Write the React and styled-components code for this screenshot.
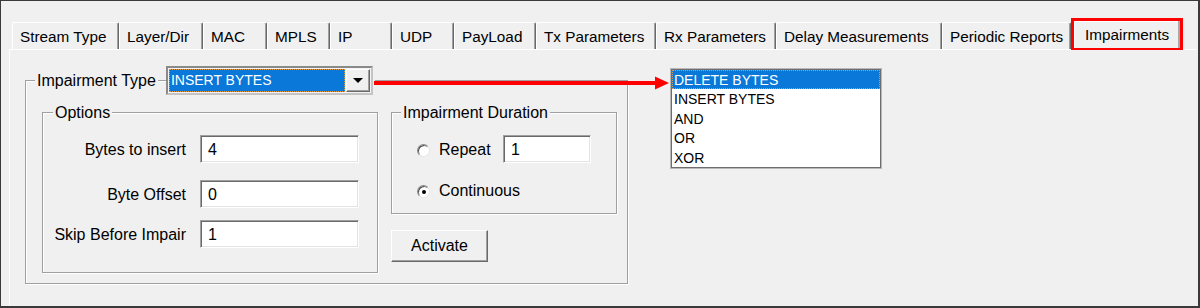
import React from "react";
import styled, { createGlobalStyle } from "styled-components";

const Global = createGlobalStyle`
  html, body { margin: 0; padding: 0; background: #f0f0f0; }
  body { font-family: "Liberation Sans", Arial, sans-serif; color: #000; }
  #root { width: 1200px; height: 308px; }
`;

const Window = styled.div`
  box-sizing: border-box;
  width: 1200px;
  height: 308px;
  background: #f0f0f0;
  border: 1px solid #3a3a3a;
  border-right-width: 2px;
  border-bottom-width: 2px;
  display: flex;
  flex-direction: column;
  padding: 17px 2px 0 8px;
  overflow: hidden;
`;

const TabStrip = styled.div`
  display: flex;
  align-items: flex-start;
  height: 32px;
  margin-left: 3px;
`;

const Tab = styled.div`
  box-sizing: border-box;
  flex: none;
  width: ${(p) => p.$w}px;
  height: 27px;
  margin-top: 4px;
  padding-left: 7px;
  padding-top: 1px;
  display: flex;
  align-items: center;
  border-left: 1px solid #fff;
  border-top: 1px solid #fff;
  border-right: 1px solid #696969;
  box-shadow: inset -1px 0 0 #a0a0a0;
  border-top-left-radius: 2px;
  border-top-right-radius: 2px;
  font-size: 15.3px;
  white-space: nowrap;
  overflow: hidden;
`;

const ActiveTab = styled.div`
  position: relative;
  z-index: 1;
  box-sizing: border-box;
  flex: none;
  width: ${(p) => p.$w}px;
  height: 32px;
  padding-left: 11px;
  padding-top: 1px;
  display: flex;
  align-items: center;
  background: #f0f0f0;
  border: 3px solid #ff0000;
  border-bottom-width: 2px;
  box-shadow: inset -2px 0 0 #a9a9a9, inset 1px 1px 0 #fff;
  font-size: 15.3px;
  white-space: nowrap;
`;

const Panel = styled.div`
  position: relative;
  flex: 1;
  margin-top: -1px;
  border-top: 1px solid #fff;
  border-left: 1px solid #fff;
  display: flex;
  align-items: flex-start;
  padding: 16px 0 0 15px;
`;

const Group = styled.fieldset`
  box-sizing: border-box;
  flex: none;
  margin: 0;
  padding: 0;
  min-width: 0;
  width: ${(p) => p.$w}px;
  height: ${(p) => p.$h}px;
  border: 1px solid #a0a0a0;
  box-shadow: 1px 1px 0 #fff, inset 1px 1px 0 #fff;
`;

const Legend = styled.legend`
  margin-left: ${(p) => p.$ml}px;
  padding: 0 2px;
  background: #f0f0f0;
`;

const LegendRow = styled.div`
  display: flex;
  align-items: center;
  font-size: 16px;
  line-height: 19px;
  white-space: nowrap;
`;

const Connector = styled.span`
  display: block;
  width: 8px;
  height: 1px;
  margin-left: 2px;
  background: #a0a0a0;
  box-shadow: 0 1px 0 #fff;
`;

const Combo = styled.div`
  box-sizing: border-box;
  width: 207px;
  height: 29px;
  display: flex;
  gap: 1px;
  padding: 1px;
  border: 2px solid;
  border-color: #8a8a8a #c4c4c4 #c4c4c4 #8a8a8a;
  background: #f4f4f4;
`;

const ComboValue = styled.div`
  flex: 1;
  display: flex;
  align-items: center;
  padding-left: 2px;
  background: #0a78d8;
  color: #fff;
  font-size: 14px;
  outline: 1px dotted #e09a4a;
  outline-offset: -1px;
`;

const ComboButton = styled.div`
  box-sizing: border-box;
  width: 24px;
  display: flex;
  align-items: center;
  justify-content: center;
  background: #f0f0f0;
  border: 1px solid;
  border-color: #fff #696969 #696969 #fff;
  box-shadow: inset -1px -1px 0 #a0a0a0;
`;

const Caret = styled.span`
  width: 0;
  height: 0;
  border-left: 5px solid transparent;
  border-right: 5px solid transparent;
  border-top: 5px solid #000;
`;

const GroupBody = styled.div`
  display: flex;
  align-items: flex-start;
  gap: ${(p) => p.$gap || 0}px;
  padding: ${(p) => p.$pad};
`;

const Column = styled.div`
  display: flex;
  flex-direction: column;
  align-items: flex-start;
`;

const FieldRow = styled.div`
  display: flex;
  align-items: center;
  height: 28px;
  margin-top: ${(p) => p.$mt}px;
  font-size: 16px;
`;

const FieldLabel = styled.label`
  width: ${(p) => p.$w}px;
  padding-top: 2px;
  text-align: ${(p) => p.$align || "left"};
  margin-right: ${(p) => p.$mr || 0}px;
  white-space: nowrap;
`;

const TextBox = styled.div`
  box-sizing: border-box;
  width: ${(p) => p.$w}px;
  height: 28px;
  display: flex;
  align-items: center;
  padding-left: 7px;
  padding-top: 1px;
  background: #fff;
  border: 1px solid;
  border-color: #a0a0a0 #fff #fff #a0a0a0;
  box-shadow: inset 1px 1px 0 #696969, inset -1px -1px 0 #e3e3e3;
  font-size: 16px;
`;

const Radio = styled.span`
  box-sizing: border-box;
  flex: none;
  width: 13px;
  height: 13px;
  margin: 3px 9px 0 0;
  border-radius: 50%;
  background: #fff;
  border: 1px solid;
  border-color: #8a8a8a #e6e6e6 #e6e6e6 #8a8a8a;
  box-shadow: inset 1px 1px 0 #505050;
  display: flex;
  align-items: center;
  justify-content: center;
  &::after {
    content: "";
    width: 4px;
    height: 4px;
    border-radius: 50%;
    background: ${(p) => (p.$checked ? "#000" : "transparent")};
  }
`;

const Button = styled.div`
  box-sizing: border-box;
  width: 97px;
  height: 32px;
  margin-top: 16px;
  display: flex;
  align-items: center;
  justify-content: center;
  background: #f0f0f0;
  border: 1px solid;
  border-color: #fff #696969 #696969 #fff;
  box-shadow: inset -1px -1px 0 #a0a0a0;
  font-size: 16px;
`;

const ListBox = styled.div`
  box-sizing: border-box;
  flex: none;
  width: 210px;
  margin: 3px 0 0 43px;
  border: 1px solid #6e6e6e;
  box-shadow: 0 0 0 1px #b8b8b8;
  background: #fff;
`;

const ListItem = styled.div`
  height: 19.4px;
  line-height: 20px;
  padding-left: 2px;
  font-size: 14px;
  background: ${(p) => (p.$selected ? "#0a78d8" : "transparent")};
  color: ${(p) => (p.$selected ? "#fff" : "#000")};
  outline: ${(p) => (p.$selected ? "1px dotted #e09a4a" : "none")};
  outline-offset: -1px;
`;

const Arrow = styled.svg`
  position: absolute;
  left: 364px;
  top: 26px;
`;

const tabs = [
  ["Stream Type", 107],
  ["Layer/Dir", 84],
  ["MAC", 64],
  ["MPLS", 63],
  ["IP", 62],
  ["UDP", 62],
  ["PayLoad", 82],
  ["Tx Parameters", 120],
  ["Rx Parameters", 120],
  ["Delay Measurements", 166],
  ["Periodic Reports", 129],
];

const options = ["DELETE BYTES", "INSERT BYTES", "AND", "OR", "XOR"];

export default function App() {
  return (
    <>
      <Global />
      <Window>
        <TabStrip>
          {tabs.map(([label, w]) => (
            <Tab key={label} $w={w}>
              {label}
            </Tab>
          ))}
          <ActiveTab $w={112}>Impairments</ActiveTab>
        </TabStrip>
        <Panel>
          <Group $w={603} $h={218}>
            <Legend $ml={9}>
              <LegendRow>
                <span>Impairment Type</span>
                <Connector />
                <Combo>
                  <ComboValue>INSERT BYTES</ComboValue>
                  <ComboButton>
                    <Caret />
                  </ComboButton>
                </Combo>
              </LegendRow>
            </Legend>
            <GroupBody $gap={13} $pad="8px 0 0 16px">
              <Group $w={336} $h={170}>
                <Legend $ml={10}>
                  <LegendRow>Options</LegendRow>
                </Legend>
                <Column>
                  <FieldRow $mt={13}>
                    <FieldLabel $w={143} $align="right" $mr={14}>
                      Bytes to insert
                    </FieldLabel>
                    <TextBox $w={159}>4</TextBox>
                  </FieldRow>
                  <FieldRow $mt={17}>
                    <FieldLabel $w={143} $align="right" $mr={14}>
                      Byte Offset
                    </FieldLabel>
                    <TextBox $w={159}>0</TextBox>
                  </FieldRow>
                  <FieldRow $mt={12}>
                    <FieldLabel $w={143} $align="right" $mr={14}>
                      Skip Before Impair
                    </FieldLabel>
                    <TextBox $w={159}>1</TextBox>
                  </FieldRow>
                </Column>
              </Group>
              <Column>
                <Group $w={226} $h={111}>
                  <Legend $ml={9}>
                    <LegendRow>Impairment Duration</LegendRow>
                  </Legend>
                  <GroupBody $pad="0 0 0 25px">
                    <Column>
                      <FieldRow $mt={13}>
                        <Radio />
                        <FieldLabel $w={64}>Repeat</FieldLabel>
                        <TextBox $w={88}>1</TextBox>
                      </FieldRow>
                      <FieldRow $mt={13}>
                        <Radio $checked />
                        <FieldLabel $w={100}>Continuous</FieldLabel>
                      </FieldRow>
                    </Column>
                  </GroupBody>
                </Group>
                <Button>Activate</Button>
              </Column>
            </GroupBody>
          </Group>
          <ListBox>
            {options.map((o, i) => (
              <ListItem key={o} $selected={i === 0}>
                {o}
              </ListItem>
            ))}
          </ListBox>
          <Arrow width="296" height="15" viewBox="0 0 296 15">
            <rect x="0" y="5" width="284" height="4" fill="#ff0000" />
            <polygon points="281,0.5 295,7 281,13.5" fill="#ff0000" />
          </Arrow>
        </Panel>
      </Window>
    </>
  );
}
